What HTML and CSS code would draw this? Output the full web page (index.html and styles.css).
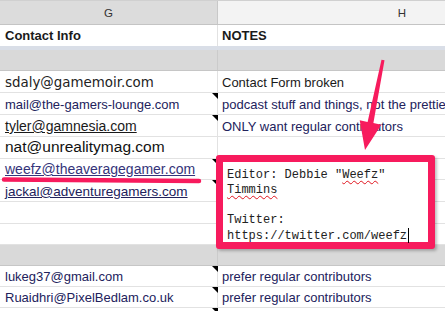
FILE: index.html
```html
<!doctype html>
<html>
  <head>
    <meta charset="utf-8">
    <title>Contacts</title>
    <link rel="stylesheet" href="styles.css">
  </head>
  <body>
    <div class="sheet">
      <div class="row colhead">
        <div class="cell g">G</div>
        <div class="cell h">H</div>
      </div>
      <div class="row titles">
        <div class="cell g">Contact Info</div>
        <div class="cell h">NOTES</div>
      </div>
      <div class="freeze"></div>
      <div class="row band short"><div class="cell g"></div><div class="cell h"></div></div>

      <div class="row">
        <div class="cell g"><span class="gothic">sdaly@gamemoir.com</span></div>
        <div class="cell h">Contact Form broken</div>
      </div>
      <div class="row">
        <div class="cell g noted navy">mail@the-gamers-lounge.com</div>
        <div class="cell h navy">podcast stuff and things, not the prettie</div>
      </div>
      <div class="row">
        <div class="cell g noted"><span class="link s14">tyler@gamnesia.com</span></div>
        <div class="cell h navy">ONLY want regular contributors</div>
      </div>
      <div class="row">
        <div class="cell g"><span class="s155">nat@unrealitymag.com</span></div>
        <div class="cell h"></div>
      </div>
      <div class="row short">
        <div class="cell g noted"><span class="link s14 slate">weefz@theaveragegamer.com</span></div>
        <div class="cell h"></div>
      </div>
      <div class="row">
        <div class="cell g noted"><span class="link s135 navy">jackal@adventuregamers.com</span></div>
        <div class="cell h"></div>
      </div>
      <div class="row"><div class="cell g"></div><div class="cell h"></div></div>
      <div class="row short"><div class="cell g"></div><div class="cell h"></div></div>

      <div class="row band short"><div class="cell g"></div><div class="cell h"></div></div>
      <div class="row short">
        <div class="cell g noted navy">lukeg37@gmail.com</div>
        <div class="cell h navy">prefer regular contributors</div>
      </div>
      <div class="row short">
        <div class="cell g noted navy">Ruaidhri@PixelBedlam.co.uk</div>
        <div class="cell h navy">prefer regular contributors</div>
      </div>
      <div class="row short">
        <div class="cell g noted"></div>
        <div class="cell h"></div>
      </div>

      <!-- cell note, open for editing -->
      <div class="note">
        <div class="line">Editor: Debbie "<span class="typo">Weefz</span>"</div>
        <div class="line"><span class="typo">Timmins</span></div>
        <div class="line"></div>
        <div class="line">Twitter:</div>
        <div class="line">https://twitter.com/weefz<span class="caret"></span></div>
      </div>

      <!-- marker scribbles -->
      <svg class="marks" width="445" height="311" viewBox="0 0 445 311">
        <path d="M4 179.5 L199 181" stroke="#f71b5d" stroke-width="4.5" stroke-linecap="round" fill="none"/>
        <polygon fill="#f71b5d" points="381.5,59.7 384.5,60.3 373.4,123.1 381.3,124.7 365,150 359.7,120.3 367.6,121.9"/>
      </svg>
    </div>
  </body>
</html>
```

FILE: styles.css
```css
html, body { margin: 0; padding: 0; background: #fff; overflow: hidden; }
body { font-family: "Liberation Sans", Arial, sans-serif; font-size: 13px; color: #1a1a1a; }

.sheet { position: relative; width: 445px; height: 311px; overflow: hidden; }

.row { display: flex; height: 22px; box-sizing: border-box; border-bottom: 1px solid #e2e2e2; }
.row.short { height: 21px; }

.cell { position: relative; flex: none; box-sizing: border-box; display: flex; align-items: flex-end; padding: 0 4px 2px; white-space: nowrap; overflow: visible; }
.cell.g { width: 218px; padding-left: 5px; border-right: 1px solid #e2e2e2; }
.cell.h { width: 368px; }

/* column letters */
.colhead { height: 25px; border-top: 1px solid #d0d0d0; border-bottom: 1px solid #c4c4c4; }
.colhead .cell { align-items: center; justify-content: center; padding: 0; font-size: 11.5px; color: #333; }
.colhead .g { background: #dcdcdc; border-right-color: #c8c8c8; }
.colhead .h { background: #f3f3f3; }

.titles { height: 21px; border-bottom: none; }
.titles .cell { font-weight: bold; padding-bottom: 3px; }

.freeze { height: 4px; background: #d9dee7; }

.band { background: #d9d9d9; border-bottom-color: #c6c6c6; }
.band .g { border-right-color: #cbcbcb; }

/* black corner = cell has a note */
.noted::after { content: ""; position: absolute; top: 0; right: -1px; border-top: 6px solid #000; border-left: 6px solid transparent; }

.navy { color: #22225c; }
.slate { color: #34347a; }
.link { text-decoration: underline; }
.gothic { font-family: "DejaVu Sans", sans-serif; font-size: 13.4px; color: #222; }
.s14 { font-size: 14px; }
.s135 { font-size: 13.5px; }
.s155 { font-size: 15.5px; color: #111; }

.note { position: absolute; left: 216px; top: 155px; width: 219px; height: 94px; box-sizing: border-box; padding: 6px 4px; border: 7px solid #f71b5d; border-radius: 3px; background: #fff; box-shadow: 2px 2px 3px rgba(0, 0, 0, .25); font-family: "Liberation Mono", monospace; font-size: 12px; line-height: 15px; color: #222; }
.note .line { height: 15px; white-space: pre; }
.typo { text-decoration: underline wavy #e0141e; text-decoration-thickness: 1px; text-underline-offset: 2px; }
.caret { display: inline-block; width: 1px; height: 15px; margin-left: 1px; background: #000; vertical-align: -4px; }

.marks { position: absolute; left: 0; top: 0; pointer-events: none; }
```
